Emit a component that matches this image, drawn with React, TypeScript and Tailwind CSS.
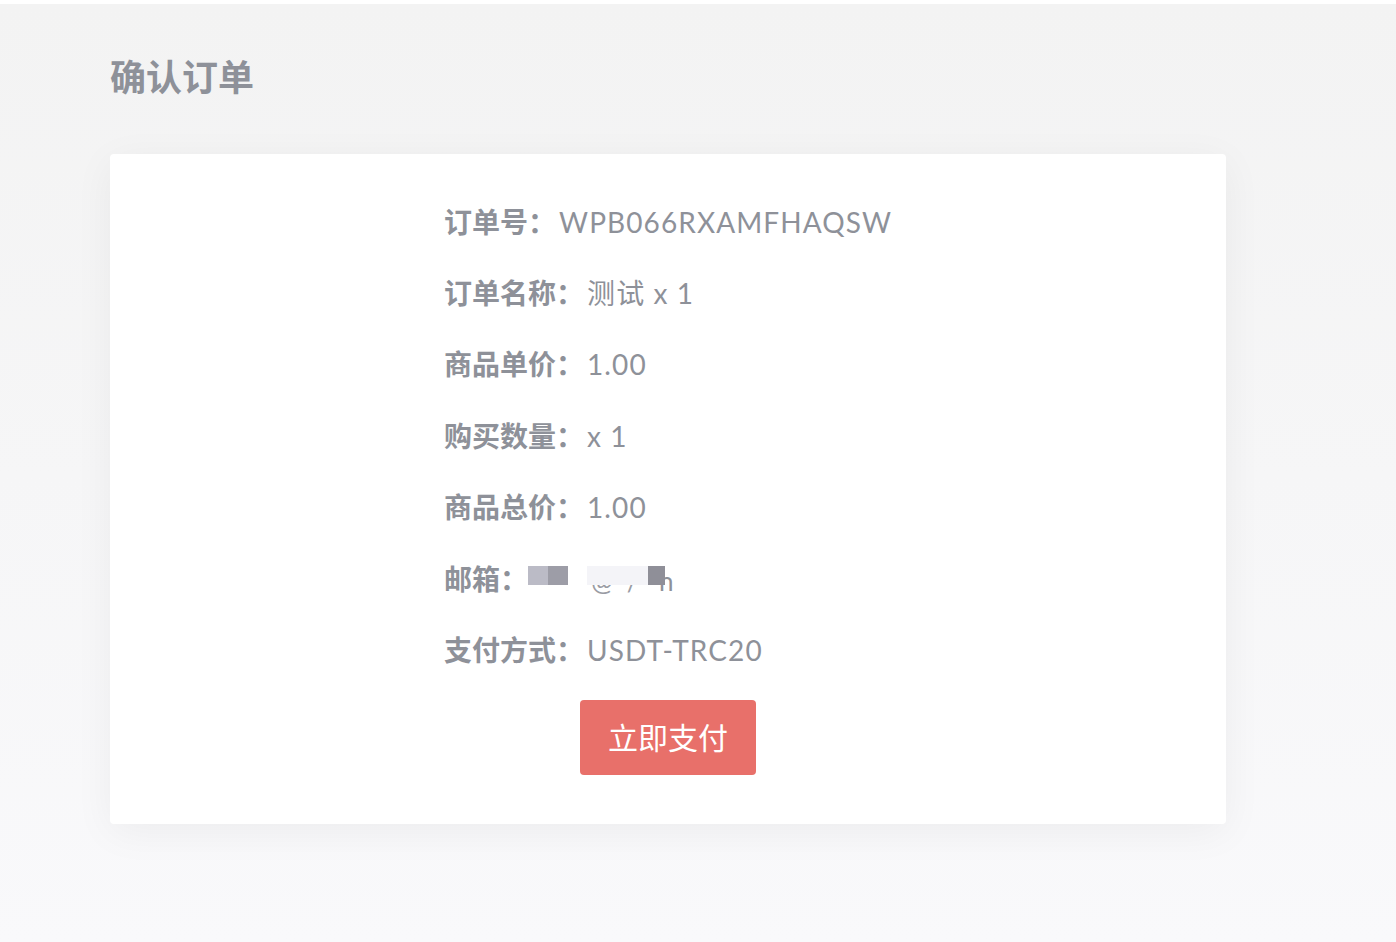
import React from "react";

function MaskedEmail() {
  return (
    <span className="relative flex h-[34px] items-start pt-[4px]">
      <span className="h-[19px] w-[20px] bg-[#bbbbc6]" />
      <span className="h-[19px] w-[20px] bg-[#9d9da7]" />
      <span className="relative ml-[19px] flex h-[30px] w-[61px] items-end gap-[14px] pl-[4px] text-[26px] leading-[30px] text-[#9a9ca4]">
        <span>@</span>
        <span>/</span>
        <span className="absolute left-0 top-0 h-[19px] w-[61px] bg-[#f4f4f8]" />
      </span>
      <span className="relative flex h-[30px] w-[26px] items-end text-[26px] leading-[30px] text-[#8e9199]">
        <span className="pl-[11px]">n</span>
        <span className="absolute left-0 top-0 h-[19px] w-[17px] bg-[#8f8f98]" />
      </span>
    </span>
  );
}

const rows: { label: string; value: React.ReactNode }[] = [
  { label: "订单号", value: "WPB066RXAMFHAQSW" },
  { label: "订单名称", value: "测试 x 1" },
  { label: "商品单价", value: "1.00" },
  { label: "购买数量", value: "x 1" },
  { label: "商品总价", value: "1.00" },
  { label: "邮箱", value: <MaskedEmail /> },
  { label: "支付方式", value: "USDT-TRC20" },
];

export default function App() {
  return (
    <div
      className="min-h-[942px] w-full border-t-[4px] border-white bg-gradient-to-b from-[#f3f3f3] to-[#f9f9fb]"
      style={{ fontFamily: '"Lato", "Noto Sans CJK SC", sans-serif' }}
    >
      <div className="pl-[110px] pr-[170px]">
        <h1 className="pt-[50px] text-[36px] font-bold leading-[46px] text-[#8e9199]">确认订单</h1>
        <div className="mt-[54px] rounded-[4px] bg-white pb-[49px] pt-[32px] shadow-[0_8px_40px_rgba(0,0,0,0.05)]">
          <div className="flex flex-col pl-[334px]">
            {rows.map((r) => (
              <div key={r.label} className="flex h-[71.4px] items-center text-[28px] text-[#8e9199]">
                <span className="font-bold">{r.label}：</span>
                {typeof r.value === "string" ? (
                  <span className="pl-[3px] font-normal tracking-[1.1px]">{r.value}</span>
                ) : (
                  r.value
                )}
              </div>
            ))}
          </div>
          <div className="mt-[14px] flex justify-center">
            <button className="h-[75px] w-[176px] rounded-[4px] bg-[#e8706a] text-[30px] text-white">
              立即支付
            </button>
          </div>
        </div>
      </div>
    </div>
  );
}
